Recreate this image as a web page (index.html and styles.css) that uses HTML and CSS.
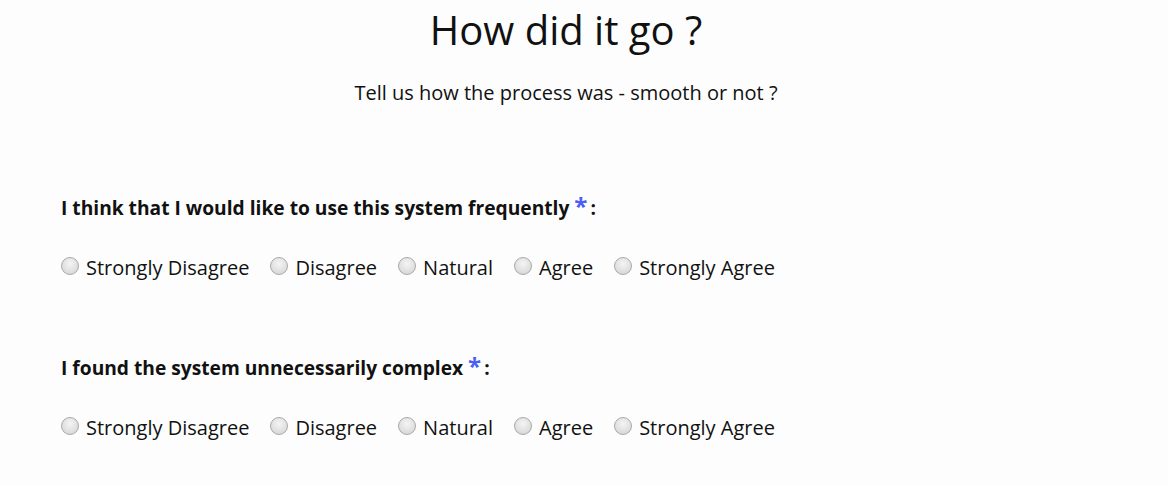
FILE: index.html
```html
<!DOCTYPE html>
<html>
<head>
<meta charset="utf-8">
<link rel="stylesheet" href="styles.css">
</head>
<body>
<header class="intro">
  <h1 class="title">How did it go ?</h1>
  <p class="subtitle">Tell us how the process was - smooth or not ?</p>
</header>
<form class="survey">
  <fieldset class="question">
    <legend class="q-label">I think that I would like to use this system frequently <span class="req">*</span>:</legend>
    <div class="options">
      <label class="opt"><input type="radio" name="q1"><span>Strongly Disagree</span></label>
      <label class="opt"><input type="radio" name="q1"><span>Disagree</span></label>
      <label class="opt"><input type="radio" name="q1"><span>Natural</span></label>
      <label class="opt"><input type="radio" name="q1"><span>Agree</span></label>
      <label class="opt"><input type="radio" name="q1"><span>Strongly Agree</span></label>
    </div>
  </fieldset>
  <fieldset class="question">
    <legend class="q-label">I found the system unnecessarily complex <span class="req">*</span>:</legend>
    <div class="options">
      <label class="opt"><input type="radio" name="q2"><span>Strongly Disagree</span></label>
      <label class="opt"><input type="radio" name="q2"><span>Disagree</span></label>
      <label class="opt"><input type="radio" name="q2"><span>Natural</span></label>
      <label class="opt"><input type="radio" name="q2"><span>Agree</span></label>
      <label class="opt"><input type="radio" name="q2"><span>Strongly Agree</span></label>
    </div>
  </fieldset>
</form>
</body>
</html>
```

FILE: styles.css
```css
html, body {
  margin: 0;
  padding: 0;
  background: #fdfdfd;
}
body {
  font-family: "Open Sans", "Liberation Sans", sans-serif;
  color: #111;
}
.intro {
  text-align: center;
  padding-top: 4px;
  padding-right: 36px;
}
.title {
  margin: 0;
  font-size: 40px;
  font-weight: 400;
  line-height: 52px;
}
.subtitle {
  margin: 24px 0 0;
  font-size: 20px;
  line-height: 26px;
}
.survey {
  padding: 89px 0 0 61px;
}
.question {
  border: 0;
  margin: 0 0 74px;
  padding: 0;
}
.question:last-child {
  margin-bottom: 0;
}
.q-label {
  padding: 0;
  font-size: 19.2px;
  font-weight: 700;
  line-height: 26px;
}
.req {
  color: #4b5ef5;
  font-size: 24px;
  font-weight: 700;
  line-height: 0;
  margin-right: 3px;
}
.options {
  display: flex;
  gap: 21px;
  margin-top: 34px;
  align-items: center;
}
.opt {
  display: flex;
  align-items: center;
  gap: 7px;
  font-size: 20px;
  line-height: 26px;
}
.opt input {
  appearance: none;
  -webkit-appearance: none;
  margin: 0;
  width: 18px;
  height: 18px;
  border-radius: 50%;
  border: 1px solid #a9a9a9;
  background: radial-gradient(circle at 50% 35%, #f4f4f4 0%, #dcdcdc 70%, #cfcfcf 100%);
  position: relative;
  top: -2px;
}
```
